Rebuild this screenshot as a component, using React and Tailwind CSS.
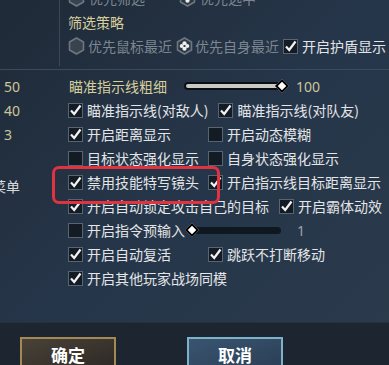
import React from "react";

const font = { fontFamily: '"Noto Sans CJK SC", "Noto Sans", sans-serif' };

const Check = ({ on }) => (
  <span className="w-[15px] h-[15px] shrink-0 border-[1.5px] border-[#59646f] bg-[#131b25] flex items-center justify-center">
    {on && (
      <svg width="13" height="13" viewBox="0 0 13 13">
        <path d="M2 6.5 L5.2 10 L11.5 1.5" fill="none" stroke="#f2f2f2" strokeWidth="2.2" />
      </svg>
    )}
  </span>
);

const Hex = ({ on }) => (
  <svg width="17" height="18" viewBox="0 0 17 18" className="shrink-0">
    <polygon
      points="8.5,1 15.5,5 15.5,13 8.5,17 1.5,13 1.5,5"
      fill={on ? "#2c3844" : "#38434e"}
      stroke="#6e7781"
      strokeWidth="1.6"
    />
    {on && (
      <g fill="#eeeeee">
        <circle cx="8.5" cy="6.3" r="2.1" />
        <circle cx="8.5" cy="11.7" r="2.1" />
        <circle cx="5.8" cy="9" r="2.1" />
        <circle cx="11.2" cy="9" r="2.1" />
        <circle cx="8.5" cy="9" r="1" fill="#2c3844" />
      </g>
    )}
  </svg>
);

const Box = ({ on, label, w }) => (
  <div className={`flex items-center gap-[4px] shrink-0 ${w || ""}`}>
    <Check on={on} />
    <span className="text-[14px] text-[#e3e5e7] whitespace-nowrap leading-none">{label}</span>
  </div>
);

const Diamond = () => (
  <span className="w-[10px] h-[10px] rotate-45 bg-white border-2 border-black block" />
);

export default function App() {
  return (
    <div
      style={font}
      className="w-[389px] h-[365px] overflow-hidden flex flex-col bg-gradient-to-br from-[#1f2a37] via-[#26364a] to-[#2b3b4c]"
    >
      {/* top filter panel */}
      <div className="flex h-[70px] border-b border-[#3c4b5b] shrink-0">
        <div className="w-[60px] shrink-0 h-[66px] border-r border-[#3a4858]" />
        <div className="pl-[8px] -mt-[14px] flex flex-col">
          <div className="h-[24px] flex items-center">
            <Hex />
            <span className="ml-[4px] text-[14px] text-[#7d8791] w-[90px]">优先筛选</span>
            <Hex on />
            <span className="ml-[4px] text-[14px] text-[#7d8791]">优先选中</span>
          </div>
          <div className="h-[24px] flex items-center text-[14px] text-[#d6cf9c]">筛选策略</div>
          <div className="h-[24px] flex items-center">
            <Hex />
            <span className="ml-[3px] text-[14px] text-[#7d8791] w-[88px] whitespace-nowrap">优先鼠标最近</span>
            <Hex on />
            <span className="ml-[2px] text-[14px] text-[#7d8791] w-[88px] whitespace-nowrap">优先自身最近</span>
            <Box on label="开启护盾显示" />
          </div>
        </div>
      </div>

      {/* main settings */}
      <div className="flex pt-[4px] relative flex-1">
        <div className="w-[60px] shrink-0 flex flex-col text-[14px] text-[#cbc69b]" style={{ fontFamily: '"Noto Sans", sans-serif' }}>
          <div className="h-[24px] flex items-center pl-[4px]">50</div>
          <div className="h-[24px] flex items-center pl-[4px]">40</div>
          <div className="h-[24px] flex items-center pl-[4px]">3</div>
          <div className="h-[28px]" />
          <div className="h-[24px] flex items-center -ml-[8px] text-[#d8dadc] whitespace-nowrap" style={font}>菜单</div>
        </div>
        <div className="pl-[8px] flex flex-col">
          <div className="h-[24px] flex items-center">
            <span className="w-[116px] pl-[1px] text-[14px] text-[#d6cf9c] whitespace-nowrap">瞄准指示线粗细</span>
            <div className="relative w-[102px] h-[14px] flex items-center">
              <div className="w-[98px] h-[8px] rounded-full bg-[#c9c9c7] border-2 border-[#0b0f14]" />
              <span className="absolute left-[93px] top-[2px]"><Diamond /></span>
            </div>
            <span className="ml-[10px] text-[14px] text-[#cbc69b]" style={{ fontFamily: '"Noto Sans", sans-serif' }}>100</span>
          </div>
          <div className="h-[24px] flex items-center gap-[10px]">
            <Box on label="瞄准指示线(对敌人)" w="min-w-[138px]" />
            <Box on label="瞄准指示线(对队友)" />
          </div>
          <div className="h-[24px] flex items-center gap-[10px]">
            <Box on label="开启距离显示" w="w-[130px]" />
            <Box label="开启动态模糊" />
          </div>
          <div className="h-[24px] flex items-center gap-[10px]">
            <Box label="目标状态强化显示" w="w-[130px]" />
            <Box label="自身状态强化显示" />
          </div>
          <div className="h-[24px] flex items-center gap-[10px]">
            <Box on label="禁用技能特写镜头" w="w-[130px]" />
            <Box on label="开启指示线目标距离显示" />
          </div>
          <div className="h-[24px] flex items-center gap-[10px]">
            <Box on label="开启自动锁定攻击自己的目标" />
            <Box on label="开启霸体动效" />
          </div>
          <div className="h-[24px] flex items-center">
            <Box label="开启指令预输入" />
            <div className="relative w-[96px] h-[14px] flex items-center">
              <div className="ml-[6px] w-[90px] h-[7px] rounded-full bg-[#0f1720]" />
              <span className="absolute left-[2px] top-[2px]"><Diamond /></span>
            </div>
            <span className="ml-[16px] text-[14px] text-[#9aa3ab]" style={{ fontFamily: '"Noto Sans", sans-serif' }}>1</span>
          </div>
          <div className="h-[24px] flex items-center gap-[10px]">
            <Box on label="开启自动复活" w="w-[130px]" />
            <Box on label="跳跃不打断移动" />
          </div>
          <div className="h-[24px] flex items-center">
            <Box on label="开启其他玩家战场同模" />
          </div>
        </div>
        {/* highlight annotation */}
        <div className="absolute left-[52px] top-[96px] w-[168px] h-[38px] border-[3px] border-[#e1323f] rounded-[7px]" />
      </div>

      {/* bottom buttons */}
      <div className="h-[43px] shrink-0 bg-[#1d2630] border-t border-[#27313c] flex pt-[14px]">
        <button className="ml-[20px] w-[96px] h-[36px] border-2 border-[#a38a55] bg-gradient-to-br from-[#4a4238] to-[#2c2824] text-white text-[17px] font-bold flex justify-center pt-[3px]">
          确定
        </button>
        <button className="ml-[71px] w-[96px] h-[36px] border-2 border-[#7db3c8] bg-gradient-to-br from-[#3a5470] to-[#2a3e55] text-white text-[17px] font-bold flex justify-center pt-[3px]">
          取消
        </button>
      </div>
    </div>
  );
}
